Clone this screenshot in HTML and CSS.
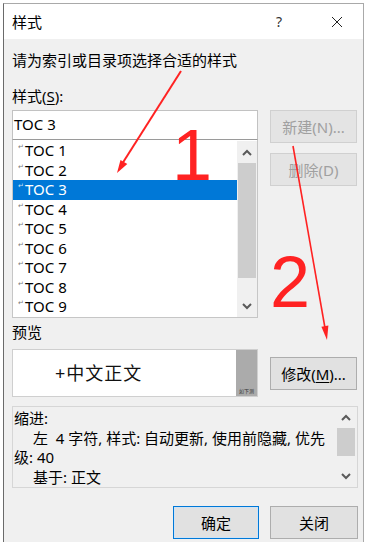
FILE: index.html
```html
<!DOCTYPE html>
<html lang="zh-CN">
<head>
<meta charset="utf-8">
<title>样式</title>
<link rel="stylesheet" href="styles.css">
</head>
<body>
<div class="dialog">
  <div class="titlebar">
    <span class="title">样式</span>
    <span class="help">?</span>
    <span class="close"><svg width="12" height="12" viewBox="0 0 12 12"><path d="M1 1 L11 11 M11 1 L1 11" stroke="#222" stroke-width="1" fill="none"/></svg></span>
  </div>
  <div class="body">
    <div class="instr">请为索引或目录项选择合适的样式</div>
    <div class="label">样式(<u>S</u>):</div>
    <div class="row-main">
      <div class="leftcol">
        <div class="input">TOC 3</div>
        <div class="list">
          <div class="items">
            <div class="item"><span class="pm">↵</span>TOC 1</div>
            <div class="item"><span class="pm">↵</span>TOC 2</div>
            <div class="item selected"><span class="pm">↵</span>TOC 3</div>
            <div class="item"><span class="pm">↵</span>TOC 4</div>
            <div class="item"><span class="pm">↵</span>TOC 5</div>
            <div class="item"><span class="pm">↵</span>TOC 6</div>
            <div class="item"><span class="pm">↵</span>TOC 7</div>
            <div class="item"><span class="pm">↵</span>TOC 8</div>
            <div class="item"><span class="pm">↵</span>TOC 9</div>
          </div>
          <div class="vscroll">
            <div class="sb-btn sb-up"><svg width="10" height="7" viewBox="0 0 10 7"><polyline points="1,6 5,2 9,6" fill="none" stroke="#5a5a5a" stroke-width="2"/></svg></div>
            <div class="sb-thumb"></div>
            <div class="sb-track"></div>
            <div class="sb-btn sb-down"><svg width="10" height="7" viewBox="0 0 10 7"><polyline points="1,1 5,5 9,1" fill="none" stroke="#5a5a5a" stroke-width="2"/></svg></div>
          </div>
        </div>
      </div>
      <div class="rightcol">
        <button class="btn disabled">新建(N)...</button>
        <button class="btn disabled">删除(D)</button>
      </div>
    </div>
    <div class="label preview-label">预览</div>
    <div class="row-preview">
      <div class="preview">
        <div class="preview-text">+中文正文</div>
        <div class="preview-side"><span>如下测</span></div>
      </div>
      <button class="btn">修改(<u>M</u>)...</button>
    </div>
    <div class="desc">
      <div class="desc-text">
        <div class="dl">缩进:</div>
        <div class="dl ind">左&nbsp;&nbsp;4 字符, 样式: 自动更新, 使用前隐藏, 优先</div>
        <div class="dl">级: 40</div>
        <div class="dl ind">基于: 正文</div>
      </div>
      <div class="vscroll small">
        <div class="sb-btn sb-up2"><svg width="10" height="7" viewBox="0 0 10 7"><polyline points="1,6 5,2 9,6" fill="none" stroke="#5a5a5a" stroke-width="2"/></svg></div>
        <div class="sb-thumb2"></div>
        <div class="sb-track"></div>
        <div class="sb-btn sb-down2"><svg width="10" height="7" viewBox="0 0 10 7"><polyline points="1,1 5,5 9,1" fill="none" stroke="#5a5a5a" stroke-width="2"/></svg></div>
      </div>
    </div>
    <div class="row-actions">
      <button class="btn default">确定</button>
      <button class="btn close-btn">关闭</button>
    </div>
  </div>
</div>
<svg class="annot" width="372" height="542" viewBox="0 0 372 542">
  <line x1="181" y1="71" x2="122" y2="164" stroke="#ff2222" stroke-width="2"/>
  <polygon points="117,173 127.3,164.1 120.5,159.9" fill="#ff2222"/>
  <line x1="293" y1="146" x2="325" y2="328" stroke="#ff2222" stroke-width="1.6"/>
  <polygon points="327,340 328.4,325.6 321.4,326.8" fill="#ff2222"/>
  <text x="172" y="180" class="num">1</text>
  <text x="270" y="307" class="num">2</text>
</svg>
</body>
</html>
```
FILE: styles.css
```css
html, body {
  margin: 0;
  padding: 0;
}
body {
  width: 372px;
  height: 542px;
  overflow: hidden;
  background: #ffffff;
  position: relative;
  font-family: "Noto Sans", "Noto Sans CJK SC", sans-serif;
  color: #000;
}
.dialog {
  margin: 3px 0 0 3px;
  width: 359px;
  height: 545px;
  border-left: 1px solid #6a6a6a;
  border-top: 1px solid #a9a9a9;
  border-right: 1px solid #a9a9a9;
  background: #f0f0f0;
}
.titlebar {
  height: 35px;
  background: #ffffff;
  display: flex;
  align-items: center;
  padding: 0 16px 0 8px;
  font-size: 15px;
}
.title {
  flex: 1;
}
.help {
  width: 20px;
  text-align: center;
  font-size: 14px;
  color: #333;
}
.close {
  width: 20px;
  margin-left: 38px;
  display: flex;
  justify-content: center;
  align-items: center;
}
.body {
  padding: 11px 4px 0 8px;
  font-size: 15px;
}
.instr {
  line-height: 20px;
  height: 20px;
}
.label {
  margin-top: 16px;
  line-height: 20px;
  height: 20px;
}
.label u {
  text-underline-offset: 2px;
}
.row-main {
  margin-top: 4px;
  display: flex;
  gap: 12px;
}
.leftcol {
  width: 246px;
}
.input {
  box-sizing: border-box;
  height: 30px;
  border: 1px solid #c2c2c2;
  border-bottom-color: #9a9a9a;
  background: #fff;
  padding-left: 1px;
  line-height: 27px;
}
.list {
  display: flex;
  height: 176px;
  border: 1px solid #c6c6c6;
  border-top: none;
  background: #fff;
  padding-top: 1px;
}
.items {
  flex: 1;
}
.item {
  height: 19.5px;
  line-height: 19.5px;
  padding-left: 5px;
  display: flex;
  white-space: nowrap;
}
.item.selected {
  background: #0078d7;
  color: #fff;
}
.pm {
  width: 7px;
  font-size: 7px;
  line-height: 8px;
  margin-top: 2px;
  color: #777;
  font-family: "DejaVu Sans", sans-serif;
}
.item.selected .pm {
  color: #cfe3f7;
}
.vscroll {
  width: 20px;
  background: #f0f0f0;
  display: flex;
  flex-direction: column;
}
.sb-btn {
  display: flex;
  justify-content: center;
  align-items: center;
}
.sb-up {
  height: 22px;
}
.sb-thumb {
  height: 115px;
  background: #cdcdcd;
  margin: 0 1px;
}
.sb-track {
  flex: 1;
}
.sb-down {
  height: 22px;
}
.rightcol {
  width: 87px;
  display: flex;
  flex-direction: column;
  gap: 10px;
}
.btn {
  box-sizing: border-box;
  width: 87px;
  height: 33px;
  background: #e1e1e1;
  border: 1px solid #adadad;
  font-family: "Noto Sans", "Noto Sans CJK SC", sans-serif;
  font-size: 15px;
  color: #000;
  padding: 0;
  margin: 0;
}
.btn u {
  text-underline-offset: 2px;
}
.btn.disabled {
  background: #e4e4e4;
  border-color: #d0d0d0;
  color: #a0a0a0;
}
.preview-label {
  margin-top: 4px;
}
.row-preview {
  margin-top: 7px;
  display: flex;
  gap: 12px;
  align-items: center;
}
.preview {
  box-sizing: border-box;
  width: 246px;
  height: 48px;
  border: 1px solid #cfcfcf;
  background: #fff;
  display: flex;
}
.preview-text {
  flex: 1;
  padding-left: 42px;
  font-size: 18px;
  letter-spacing: 1px;
  line-height: 46px;
  color: #111;
}
.preview-side {
  width: 21px;
  background: #ababab;
  display: flex;
  align-items: flex-end;
  justify-content: center;
}
.preview-side span {
  font-size: 5px;
  line-height: 7px;
  color: #333;
  margin-bottom: 1px;
}
.desc {
  margin-top: 9px;
  box-sizing: border-box;
  width: 346px;
  height: 82px;
  border: 1px solid #d6d6d6;
  background: #f0f0f0;
  display: flex;
}
.desc-text {
  flex: 1;
  padding: 2px 0 0 1px;
  font-size: 15px;
}
.dl {
  line-height: 19.5px;
  height: 19.5px;
  white-space: nowrap;
}
.dl.ind {
  padding-left: 19px;
}
.vscroll.small {
  margin-right: 1px;
}
.sb-up2 {
  height: 20px;
}
.sb-thumb2 {
  height: 28px;
  margin: 1px 1px 0;
  background: #cdcdcd;
}
.sb-down2 {
  height: 22px;
}
.row-actions {
  margin-top: 18px;
  width: 346px;
  display: flex;
  justify-content: flex-end;
  gap: 11px;
}
.btn.default {
  width: 86px;
  border: 1px solid #0078d7;
  box-shadow: inset 0 0 0 1px #cfe3f5;
}
.btn.close-btn {
  width: 88px;
}
.annot {
  position: absolute;
  left: 0;
  top: 0;
  pointer-events: none;
}
.num {
  font-family: "Liberation Sans", sans-serif;
  font-size: 72px;
  fill: #ff2222;
}
```
